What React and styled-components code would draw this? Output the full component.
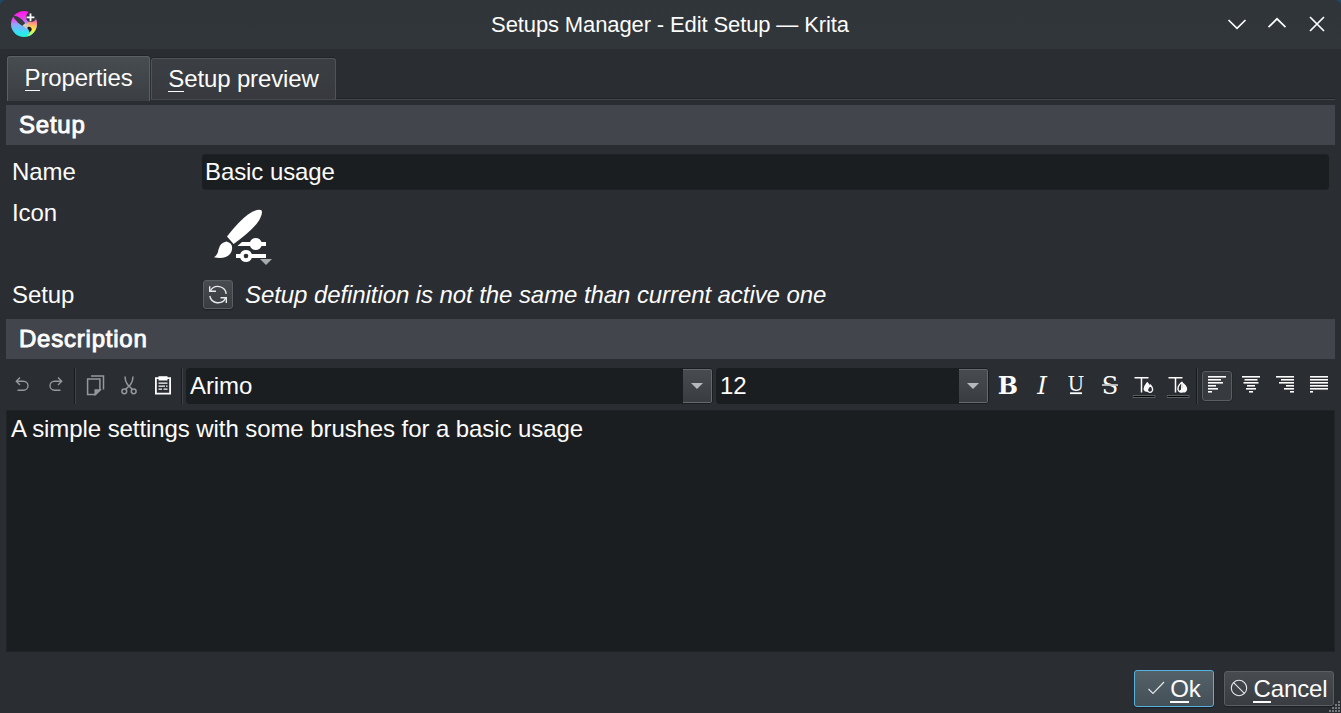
import React from "react";
import styled, { createGlobalStyle, css } from "styled-components";

const Global = createGlobalStyle`
  *, *::before { box-sizing: border-box; }
  body { margin: 0; background: #2a2e32; overflow: hidden; }
`;

const Window = styled.div`
  width: 1341px;
  height: 713px;
  display: flex;
  flex-direction: column;
  position: relative;
  background: #2a2d32;
  color: #fcfcfc;
  font: 24px/28px "Liberation Sans", Arial, sans-serif;
  letter-spacing: -0.08px;
  white-space: nowrap;
  svg { display: block; flex: none; }
  button, input { letter-spacing: inherit; }
`;

const TitleBar = styled.header`
  height: 49px;
  flex: none;
  display: grid;
  grid-template-columns: 160px 1fr 160px;
  align-items: center;
  padding: 0 4px 0 10px;
  background: linear-gradient(#30353a, #31363a);
`;

const Title = styled.h1`
  margin: 0 0 0 -7px;
  font-size: 22px;
  font-weight: 400;
  letter-spacing: -0.12px;
  text-align: center;
`;

const WindowControls = styled.div`
  display: flex;
  justify-content: flex-end;
  padding-bottom: 1px;
`;

const Corner = styled.svg`
  position: absolute;
  top: 0;
  ${(p) => (p.$right ? "right: 0; transform: scaleX(-1);" : "left: 0;")}
`;

const TabStrip = styled.nav`
  height: 56px;
  flex: none;
  display: flex;
  align-items: flex-start;
  padding: 7px 6px 0 7px;
`;

const Tab = styled.button`
  width: ${(p) => p.$width}px;
  height: ${(p) => (p.$active ? 45 : 42)}px;
  margin: ${(p) => (p.$active ? 0 : "2px 0 0 1px")};
  padding: 0 0 ${(p) => (p.$active ? 3 : 1)}px;
  flex: none;
  color: inherit;
  font: inherit;
  letter-spacing: -0.14px !important;
  border: 1px solid ${(p) => (p.$active ? "#5c6064" : "#505458")};
  border-bottom: ${(p) => (p.$active ? "0" : "1px solid #46494d")};
  border-radius: 3px 3px 0 0;
  background: ${(p) => (p.$active ? "linear-gradient(#474c50, #3b3f44)" : "linear-gradient(#3b3f43, #37393e)")};
  box-shadow: 0 -1px 0 #222528;
`;

const TabRule = styled.div`
  flex: 1;
  height: 44px;
  border-bottom: 1px solid #45484c;
  box-shadow: inset 0 -1px 0 #202326;
`;

const Key = styled.span`
  display: inline-block;
  height: ${(p) => (p.$thick ? 28 : 27)}px;
  border-bottom: ${(p) => p.$thick || 1}px solid #fcfcfc;
`;

const SectionHeading = styled.h2`
  height: 40px;
  flex: none;
  margin: 0 6px;
  padding: 0 13px 1px;
  display: flex;
  align-items: center;
  background: #42454c;
  font-size: 24px;
  font-weight: 400;
  letter-spacing: 0.78px;
  -webkit-text-stroke: 0.95px #fcfcfc;
`;

const Form = styled.section`
  height: 174px;
  flex: none;
  display: grid;
  grid-template-columns: 190px 1fr;
  grid-template-rows: 36px 77px 44px;
  padding: 9px 12px 0;
`;

const Label = styled.label`
  padding-top: ${(p) => p.$top || 4}px;
`;

const Input = styled.input`
  width: 100%;
  height: 36px;
  padding: 0 3px 1px;
  color: inherit;
  font: inherit;
  background: #1b1e20;
  border: 1px solid #202326;
  border-width: 1px 0;
  border-radius: 4px;
  outline: none;
`;

const IconPicker = styled.div`
  padding: 15px 0 0 8px;
`;

const SetupStatus = styled.div`
  display: flex;
  align-items: flex-start;
  gap: 12px;
  padding: 13px 0 0 1px;
`;

const raised = css`
  border: 1px solid #5b5f63;
  border-radius: 3px;
  background: linear-gradient(#484c51, #393c41);
  box-shadow: 0 1px 1px #1d2023;
`;

const RefreshButton = styled.button`
  width: 30px;
  height: 29px;
  padding: 0;
  display: grid;
  place-items: center;
  ${raised}
`;

const StatusText = styled.em`
  padding-top: 1px;
`;

const Toolbar = styled.div`
  height: 51px;
  flex: none;
  display: flex;
  align-items: flex-start;
  padding: 9px 5px 0;
`;

const Tool = styled.button`
  width: 34px;
  height: 36px;
  padding: 0;
  flex: none;
  display: grid;
  place-items: center;
  border: 0;
  background: none;
  color: ${(p) => (p.$disabled ? "#96999b" : "#fcfcfc")};
`;

const AlignTool = styled(Tool)`
  padding-bottom: 2px;
`;

const CheckedTool = styled(Tool)`
  width: 30px;
  height: 30px;
  margin: 3px 2px 0;
  padding-bottom: 2px;
  border: 1px solid #5a5d61;
  border-radius: 3px;
  background: #373a3f;
  box-shadow: 0 0 0 1px #25282b;
`;

const Separator = styled.div`
  width: 5px;
  height: 36px;
  flex: none;
  padding-left: 1px;
  &::before {
    content: "";
    display: block;
    width: 2px;
    height: 36px;
    border-left: 1px solid #191c1e;
    border-right: 1px solid #404347;
  }
`;

const Combo = styled.div`
  width: ${(p) => p.$width}px;
  height: 36px;
  flex: none;
  margin: 0 2px 0 1px;
  padding: 1px 1px 1px 4px;
  display: flex;
  justify-content: space-between;
  border-radius: 4px;
  background: #1b1e20;
  line-height: 34px;
`;

const ComboArrow = styled.span`
  width: 29px;
  height: 34px;
  display: grid;
  place-items: center;
  border: 1px solid #65696d;
  border-left: 0;
  border-radius: 0 2px 2px 0;
  background: linear-gradient(#484c51, #393c41);
`;

const Editor = styled.div`
  height: 242px;
  flex: none;
  margin: 0 6px;
  padding: 4px 4px;
  background: #1b1e20;
  border: 1px solid #212427;
`;

const Footer = styled.footer`
  flex: 1;
  display: flex;
  justify-content: flex-end;
  align-items: flex-start;
  gap: 10px;
  padding: 18px 7px 0;
`;

const DialogButton = styled.button`
  width: ${(p) => p.$width}px;
  height: ${(p) => (p.$primary ? 37 : 35)}px;
  margin-top: ${(p) => (p.$primary ? 0 : 1)}px;
  padding: 0;
  display: flex;
  align-items: center;
  justify-content: center;
  gap: 5px;
  color: inherit;
  font: inherit;
  ${raised}
  ${(p) =>
    p.$primary &&
    css`
      border-color: #56b3df;
      background: linear-gradient(#546169, #435058);
    `}
  svg { margin-top: -2px; }
`;

const Grip = styled.svg`
  position: absolute;
  right: 0;
  bottom: 0;
`;

const KritaLogo = () => (
  <svg width="28" height="28" viewBox="0 0 28 28" transform="translate(0 -1)">
    <defs>
      <linearGradient id="base" x1="0.4" y1="0" x2="0.45" y2="1">
        <stop offset="0" stopColor="#ff16e8" />
        <stop offset="0.28" stopColor="#f03cf2" />
        <stop offset="0.5" stopColor="#9aa0f5" />
        <stop offset="0.75" stopColor="#43d8fa" />
        <stop offset="1" stopColor="#19f6dd" />
      </linearGradient>
      <linearGradient id="warm" x1="0.5" y1="0" x2="0.4" y2="1">
        <stop offset="0" stopColor="#ff5fa9" />
        <stop offset="0.3" stopColor="#ffb768" />
        <stop offset="0.6" stopColor="#fff13a" />
        <stop offset="1" stopColor="#8eff73" />
      </linearGradient>
    </defs>
    <circle cx="14" cy="14" r="13" fill="url(#base)" />
    <path d="M16 15L20 10L26.3 10A13 13 0 0 1 17 26.6Q22 22 20 18Z" fill="url(#warm)" />
    <path d="M5 16Q13 23 19 19L15 15L10 14Z" fill="#71b9ff" opacity=".7" />
    <path d="M2.5 5.8Q7 5 12 9.5L15.5 13.5L12.5 16Q7 13 2.5 5.8Z" fill="#363b3e" />
    <path d="M12.5 15.5L15.5 13L19.5 16.5L17 19Z" fill="#d4c9bd" />
    <path d="M17.5 17Q21.5 16 21.8 20L19.5 22.4Q19 20 17.5 18.5Z" fill="#191b1d" />
    <path d="M16 7Q17 2 20 1.5L25 4L26 9Q24 12.5 21 12Q16 12 16 7Z" fill="#31363a" />
    <path d="M20.5 3.5V11.3M16.6 7.4H24.4" stroke="#fff" strokeWidth="1.8" />
  </svg>
);

const ControlIcon = ({ d }) => (
  <svg width="40" height="30" viewBox="0 0 40 30" fill="none" stroke="#fcfcfc" strokeWidth="1.7">
    <path d={d} />
  </svg>
);

const BrushIcon = () => (
  <svg width="64" height="64" viewBox="0 0 64 64" fill="#fff">
    <path d="M51.5 5.2Q53 8.5 49 15.5Q43 25 23.6 39L17 31.5Q29 16 38 9.5Q48 3 51.5 5.2Z" />
    <path d="M4 52.3Q8 50 8.5 44.5Q10 37.5 16.5 36.5Q23 38 22 44.5C21 51.5 13 54.5 4 52.3Z" />
    <path d="M27.5 41L32 37H40A6.2 6.2 0 0 1 51.5 37H56V41H51.5A6.2 6.2 0 0 1 40 41Z" />
    <path fillRule="evenodd" d="M26 49H30.2A6.2 6.2 0 0 1 41.8 49H56V53H41.8A6.2 6.2 0 0 1 30.2 53H26ZM36 48.7A2.3 2.3 0 1 0 36 53.3A2.3 2.3 0 1 0 36 48.7Z" />
    <path d="M50 54H62L56 60Z" fill="#a8abad" />
  </svg>
);

const RefreshIcon = () => (
  <svg width="22" height="22" viewBox="0 0 22 22" fill="none" stroke="#e8e9e9" strokeWidth="1.4">
    <path d="M3.4 7A8.4 8.4 0 0 1 19.2 9.8M18.6 14A8.4 8.4 0 0 1 2.8 12" />
    <path d="M2.7 2.2V7.2H9M19.3 19V13.8H13.5" />
  </svg>
);

const UndoIcon = ({ flip }) => (
  <svg width="22" height="22" viewBox="0 0 22 22" fill="none" stroke="currentColor" strokeWidth="1.35" transform={flip ? "scale(-1 1)" : undefined}>
    <path d="M6 6.2H12.5A4.5 4.5 0 0 1 12.5 15.2H6.5M9 2.5L5.3 6.2L9 9.9" />
  </svg>
);

const CopyIcon = () => (
  <svg width="22" height="22" viewBox="0 0 22 22" fill="none" stroke="currentColor" strokeWidth="1.5">
    <path d="M7 .9H19.5V14.5M3.6 4H15.9V15L11.4 19.5H3.6Z" />
    <path d="M11.2 19.5V15H16Z" fill="currentColor" />
  </svg>
);

const CutIcon = () => (
  <svg width="22" height="22" viewBox="0 0 22 22" fill="none" stroke="currentColor" strokeWidth="1.5">
    <path d="M7 1.5Q7 6 9.5 9.5L14.5 14.5M15 1.5Q15 6 12.5 9.5L7.5 14.5" />
    <circle cx="6.3" cy="16.3" r="2.4" /><circle cx="15.7" cy="16.3" r="2.4" />
  </svg>
);

const PasteIcon = () => (
  <svg width="22" height="22" viewBox="0 0 22 22" fill="none" stroke="currentColor">
    <path d="M3.9 3.2H18.1V18.6H3.9Z" strokeWidth="1.8" />
    <path d="M6.5 1.2H15.5V5.5H6.5Z" fill="currentColor" stroke="none" />
    <path d="M6.5 8.2H15.5M6.5 11.2H13M6.5 14.2H10M11.5 14.2H15.5M14 11.2H15.5" strokeWidth="1.2" />
  </svg>
);

const LetterIcon = ({ letter, weight, italic, size, x = 17, y, line, lineColor = "#fcfcfc" }) => (
  <svg width="34" height="36" viewBox="0 0 34 36">
    <text x={x} y={y} textAnchor="middle" fill="currentColor" fontFamily={'"DejaVu Serif", serif'} fontWeight={weight} fontStyle={italic ? "italic" : "normal"} fontSize={size} letterSpacing="0">{letter}</text>
    {line && <path d={line} stroke={lineColor} strokeWidth="1.8" />}
  </svg>
);

const ColorIcon = ({ background }) => (
  <svg width="24" height="26" viewBox="0 0 24 26" transform="translate(.5 0)">
    <path d="M2 4.7H16M9 4.7V19.5" stroke="currentColor" strokeWidth="1.5" fill="none" />
    {background ? (
      <>
        <path d="M15 9.5Q11 13 11.5 16.5Q12.5 19.5 15 19L15.5 9.5Z" fill="none" stroke="currentColor" strokeWidth="1.4" />
        <path d="M15 8.8Q20.5 12 20.7 16.2Q20 19.5 17 19.6Q13.5 19.5 13.2 17.5Q17.5 16 15 8.8Z" fill="currentColor" />
      </>
    ) : (
      <>
        <path d="M14.6 8.8Q18 11.5 17.5 15Q14.5 16 15.5 19Q11.3 19 11 16Q11.3 13 14.6 8.8Z" fill="currentColor" />
        <path d="M17.8 12Q20.7 15 20 17.5Q19 19.8 16.5 19.2Q14 18 15.5 15.5Z" fill="#2a2d32" stroke="currentColor" strokeWidth="1.3" />
      </>
    )}
    <path d="M.5 22.5H22.5V24.5H.5Z" fill="#050606" stroke="#5b5e61" strokeWidth="1" />
  </svg>
);

const LINE_WIDTHS = [18, 13, 15, 8, 10, 4];

const AlignIcon = ({ mode }) => (
  <svg width="18" height="18" viewBox="0 0 18 18">
    {LINE_WIDTHS.map((w, i) => {
      const width = mode === "justify" ? (i < 5 ? 18 : 3) : w;
      const x = mode === "center" ? (18 - width) / 2 : mode === "right" ? 18 - width : 0;
      return <rect key={i} x={x} y={i * 3} width={width} height="1.6" fill="#fcfcfc" />;
    })}
  </svg>
);

const Arrow = () => (
  <svg width="12" height="6" viewBox="0 0 12 6"><path d="M0 0H12L6 6Z" fill="#b7babc" /></svg>
);

const GRIP_DOTS = [[10, 1], [7, 4], [10, 4], [4, 7], [7, 7], [10, 7], [1, 10], [4, 10], [7, 10], [10, 10]];

export default function App() {
  return (
    <>
      <Global />
      <Window>
        <TitleBar>
          <KritaLogo />
          <Title>Setups Manager - Edit Setup — Krita</Title>
          <WindowControls>
            <ControlIcon d="M11.5 11L20 19.4L28.5 11" />
            <ControlIcon d="M11.5 18.2L20 9.8L28.5 18.2" />
            <ControlIcon d="M13 8L27 22M27 8L13 22" />
          </WindowControls>
        </TitleBar>
        <Corner width="6" height="6"><path d="M0 0H5Q1 1 0 5Z" fill="#1f4a68" /></Corner>
        <Corner $right width="6" height="6"><path d="M0 0H5Q1 1 0 5Z" fill="#1f4a68" /></Corner>

        <TabStrip>
          <Tab $active $width={143}><Key>P</Key>roperties</Tab>
          <Tab $width={185}><Key>S</Key>etup preview</Tab>
          <TabRule />
        </TabStrip>

        <SectionHeading>Setup</SectionHeading>
        <Form>
          <Label>Name</Label>
          <Input defaultValue="Basic usage" />
          <Label $top={9}>Icon</Label>
          <IconPicker><BrushIcon /></IconPicker>
          <Label $top={14}>Setup</Label>
          <SetupStatus>
            <RefreshButton><RefreshIcon /></RefreshButton>
            <StatusText>Setup definition is not the same than current active one</StatusText>
          </SetupStatus>
        </Form>

        <SectionHeading>Description</SectionHeading>
        <Toolbar>
          <Tool $disabled><UndoIcon /></Tool>
          <Tool $disabled><UndoIcon flip /></Tool>
          <Separator />
          <Tool $disabled><CopyIcon /></Tool>
          <Tool $disabled><CutIcon /></Tool>
          <Tool><PasteIcon /></Tool>
          <Separator />
          <Combo $width={527}>Arimo<ComboArrow><Arrow /></ComboArrow></Combo>
          <Combo $width={273}>12<ComboArrow><Arrow /></ComboArrow></Combo>
          <Tool><LetterIcon letter="B" weight="700" size={24} y={26} /></Tool>
          <Tool><LetterIcon letter="I" italic size={24.5} x={17} y={26} /></Tool>
          <Tool><LetterIcon letter="U" size={20} y={23} line="M11 25.2H23" /></Tool>
          <Tool><LetterIcon letter="S" size={24} y={26} line="M9 17H25" lineColor="#c2c4c5" /></Tool>
          <Tool><ColorIcon /></Tool>
          <Tool><ColorIcon background /></Tool>
          <Separator />
          <CheckedTool><AlignIcon mode="left" /></CheckedTool>
          <AlignTool><AlignIcon mode="center" /></AlignTool>
          <AlignTool><AlignIcon mode="right" /></AlignTool>
          <AlignTool><AlignIcon mode="justify" /></AlignTool>
        </Toolbar>
        <Editor>A simple settings with some brushes for a basic usage</Editor>

        <Footer>
          <DialogButton $primary $width={80}>
            <svg width="18" height="18" viewBox="0 0 18 18" fill="none" stroke="#e8eaeb" strokeWidth="1.1"><path d="M1.5 10L6 14.5L17 3" /></svg>
            <span><Key $thick={2}>O</Key>k</span>
          </DialogButton>
          <DialogButton $width={110}>
            <svg width="18" height="18" viewBox="0 0 18 18" fill="none" stroke="#e8eaeb" strokeWidth="1.1"><circle cx="9" cy="9" r="7.7" /><path d="M3.6 3.6L14.4 14.4" /></svg>
            <span><Key $thick={2}>C</Key>ancel</span>
          </DialogButton>
        </Footer>
        <Grip width="12" height="12">
          {GRIP_DOTS.map(([x, y]) => <rect key={`${x}-${y}`} x={x - 1} y={y - 1} width="2" height="2" fill="#777a7d" />)}
        </Grip>
      </Window>
    </>
  );
}
